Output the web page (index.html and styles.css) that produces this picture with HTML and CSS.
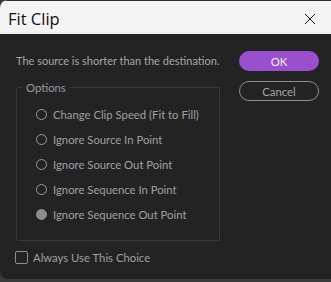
FILE: index.html
```html
<!DOCTYPE html>
<html lang="en">
<head>
  <meta charset="UTF-8" />
  <title>Fit Clip</title>
  <link rel="stylesheet" href="styles.css">
</head>
<body>

  <div class="window">
    <div class="titlebar">
      <span class="title">Fit Clip</span>
      <svg class="close" width="12" height="12" viewBox="0 0 12 12">
        <path d="M1 1 L11 11 M11 1 L1 11" stroke="#1a1a1a" stroke-width="1" fill="none"/>
      </svg>
    </div>

    <div class="content">
      <div class="main">
        <p class="message">The source is shorter than the destination.</p>

        <!-- Options group -->
        <fieldset class="options">
          <legend>Options</legend>
          <div class="radio"><span class="dot"></span>Change Clip Speed (Fit to Fill)</div>
          <div class="radio"><span class="dot"></span>Ignore Source In Point</div>
          <div class="radio"><span class="dot"></span>Ignore Source Out Point</div>
          <div class="radio"><span class="dot"></span>Ignore Sequence In Point</div>
          <div class="radio disabled"><span class="dot"></span>Ignore Sequence Out Point</div>
        </fieldset>
      </div>

      <div class="buttons">
        <button class="btn ok" type="button">OK</button>
        <button class="btn cancel" type="button">Cancel</button>
      </div>
    </div>

    <div class="always"><span class="box"></span>Always Use This Choice</div>
  </div>

</body>
</html>
```

FILE: styles.css
```css
html, body {
  margin: 0;
  height: 100%;
}
body {
  background-color: #3a3a3a;
  font-family: "Source Sans Pro", "Lato", sans-serif;
}
.window {
  height: 279px;
  background-color: #232323;
  border-radius: 8px 0 0 8px;
  overflow: hidden;
  display: flex;
  flex-direction: column;
}
.titlebar {
  height: 34px;
  background-color: #f3f3f3;
  display: flex;
  align-items: center;
  justify-content: space-between;
  padding: 0 15px 0 8px;
  border-top: 1px solid #2a2a2a;
  box-sizing: border-box;
}
.title {
  font-family: "Open Sans", sans-serif;
  font-size: 16.5px;
  color: #111;
  padding-top: 2px;
}
.close {
  margin-top: 3px;
}
.content {
  display: flex;
  padding: 0 12px 0 16px;
}
.main {
  width: 204px;
}
.message {
  margin: 20px 0 0 0;
  font-size: 11px;
  color: #a6a6a6;
  line-height: 14px;
}
.options {
  margin: 13px 0 0 0;
  padding: 8px 0 0 19px;
  border: 1px solid #393939;
  border-radius: 2px;
  height: 160px;
  box-sizing: border-box;
}
.options legend {
  font-size: 11.3px;
  color: #9a9a9a;
  padding: 0 4px;
  margin-left: -14px;
}
.radio {
  display: flex;
  align-items: center;
  height: 25px;
  font-size: 11.3px;
  color: #a0a0a0;
}
.dot {
  flex-shrink: 0;
  width: 11px;
  height: 11px;
  box-sizing: border-box;
  border: 1.5px solid #9a9a9a;
  border-radius: 50%;
  margin-right: 6px;
}
.radio.disabled .dot {
  background-color: #8e8e8e;
  border-color: #8e8e8e;
}
.buttons {
  margin-left: auto;
  margin-top: 17px;
  display: flex;
  flex-direction: column;
  gap: 10px;
}
.btn {
  width: 80px;
  height: 20px;
  border-radius: 10px;
  font-family: inherit;
  font-size: 11.3px;
  padding: 0;
}
.ok {
  background-color: #9a4fcf;
  border: none;
  color: #f2f2f2;
}
.cancel {
  background-color: transparent;
  border: 1.5px solid #8e8e8e;
  color: #a6a6a6;
}
.always {
  display: flex;
  align-items: center;
  margin: 10px 0 0 15px;
  font-size: 11.3px;
  color: #a0a0a0;
}
.box {
  flex-shrink: 0;
  width: 13px;
  height: 13px;
  box-sizing: border-box;
  border: 1.5px solid #8e8e8e;
  border-radius: 2px;
  margin-right: 5px;
}
```
